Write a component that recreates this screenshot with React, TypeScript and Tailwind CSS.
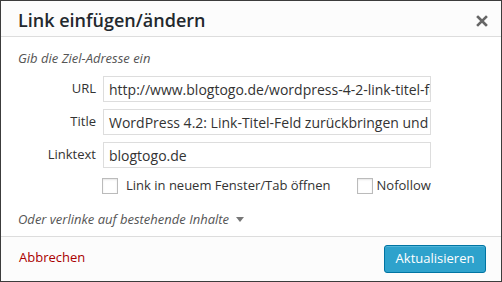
import React from "react";

export default function App() {
  const font = { fontFamily: '"Open Sans", "Noto Sans", sans-serif' };
  return (
    <div
      className="w-[502px] h-[282px] bg-white border border-[#3c3c3c] flex flex-col text-[#444]"
      style={font}
    >
      <div className="h-[36px] shrink-0 border-b border-[#dddddd] bg-[#fcfcfc] flex items-center justify-between pl-[17px] pr-[13px]">
        <div className="text-[18px] font-semibold text-[#23282d] leading-none pt-[2px]">Link einfügen/ändern</div>
        <svg width="12" height="12" viewBox="0 0 12 12" className="mt-[4px]">
          <path d="M2 2 L10 10 M10 2 L2 10" stroke="#666" strokeWidth="2.6" strokeLinecap="square" />
        </svg>
      </div>
      <div className="flex-1 flex flex-col pl-[17px]">
        <div className="italic text-[13px] text-[#555] mt-[12px] leading-[18px]">Gib die Ziel-Adresse ein</div>
        <div className="flex flex-col gap-[7px] mt-[9px]">
          {[
            ["URL", "http://www.blogtogo.de/wordpress-4-2-link-titel-feld"],
            ["Title", "WordPress 4.2: Link-Titel-Feld zurückbringen und"],
            ["Linktext", "blogtogo.de"],
          ].map(([l, v]) => (
            <div key={l} className="flex items-center">
              <div className="w-[79px] text-right text-[13px] text-[#333] pr-[1px]">{l}</div>
              <div className="ml-[6px] w-[328px] h-[26px] border border-[#dddddd] bg-white flex items-center pl-[5px] pr-[4px] overflow-hidden">
                <span className="text-[14px] text-[#333] whitespace-nowrap">{v}</span>
              </div>
            </div>
          ))}
        </div>
        <div className="flex items-center mt-[8px] ml-[84px] text-[13px] text-[#333]">
          <div className="w-[16px] h-[16px] border border-[#bbbbbb] bg-white shadow-[inset_0_1px_2px_rgba(0,0,0,0.1)]" />
          <span className="ml-[8px]">Link in neuem Fenster/Tab öffnen</span>
          <div className="ml-[26px] w-[16px] h-[16px] border border-[#bbbbbb] bg-white shadow-[inset_0_1px_2px_rgba(0,0,0,0.1)]" />
          <span className="ml-[4px]">Nofollow</span>
        </div>
        <div className="flex items-center mt-[14px] italic text-[13px] text-[#555]">
          <span>Oder verlinke auf bestehende Inhalte</span>
          <svg width="8" height="6" viewBox="0 0 8 6" className="ml-[7px] mt-[2px]">
            <path d="M0 0 L8 0 L4 5 Z" fill="#777" />
          </svg>
        </div>
      </div>
      <div className="h-[45px] shrink-0 border-t border-[#dddddd] bg-[#fcfcfc] flex items-center justify-between pl-[18px] pr-[15px]">
        <span className="text-[13px] text-[#a00] mt-[-2px]">Abbrechen</span>
        <div className="h-[28px] w-[102px] rounded-[3px] bg-[#2ea2cc] border border-[#0074a2] shadow-[inset_0_1px_0_rgba(120,200,230,0.5)] flex items-center justify-center text-white text-[13px]">
          Aktualisieren
        </div>
      </div>
    </div>
  );
}
